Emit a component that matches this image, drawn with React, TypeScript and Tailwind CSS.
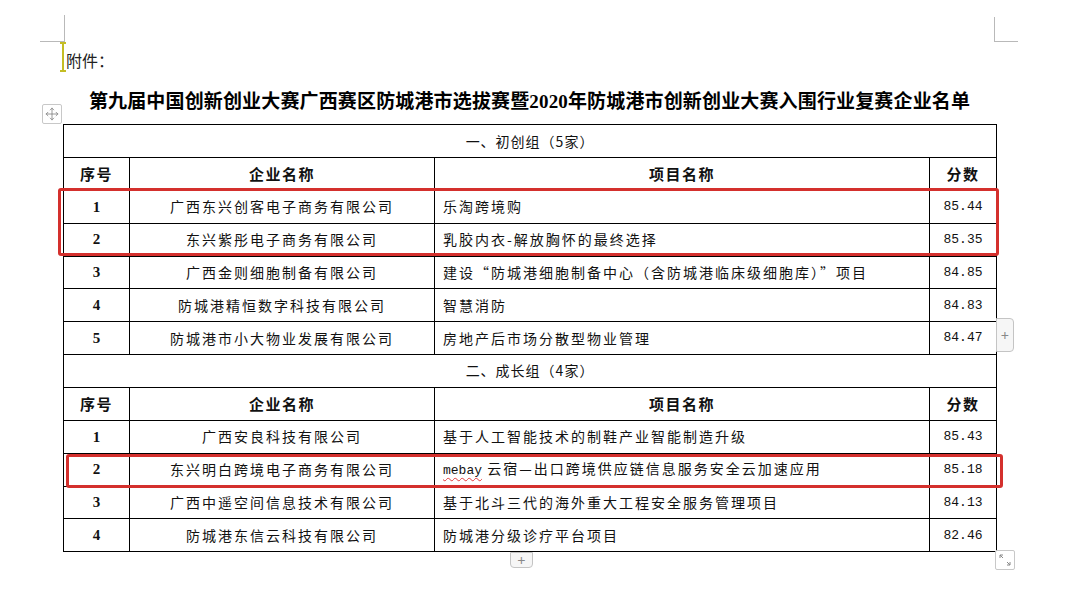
import { Move } from "lucide-react";

type Row = { no: string; company: string; project: React.ReactNode; score: string };

const groupOne: Row[] = [
  { no: "1", company: "广西东兴创客电子商务有限公司", project: "乐淘跨境购", score: "85.44" },
  { no: "2", company: "东兴紫彤电子商务有限公司", project: "乳胶内衣-解放胸怀的最终选择", score: "85.35" },
  { no: "3", company: "广西金则细胞制备有限公司", project: "建设“防城港细胞制备中心（含防城港临床级细胞库）”项目", score: "84.85" },
  { no: "4", company: "防城港精恒数字科技有限公司", project: "智慧消防", score: "84.83" },
  { no: "5", company: "防城港市小大物业发展有限公司", project: "房地产后市场分散型物业管理", score: "84.47" },
];

const groupTwo: Row[] = [
  { no: "1", company: "广西安良科技有限公司", project: "基于人工智能技术的制鞋产业智能制造升级", score: "85.43" },
  {
    no: "2",
    company: "东兴明白跨境电子商务有限公司",
    project: (
      <>
        <span className="underline decoration-wavy decoration-[#e03a3a] decoration-1 underline-offset-[3px] tracking-[0px] font-['Liberation_Mono',monospace] text-[13px]">mebay</span>
        {" 云宿—出口跨境供应链信息服务安全云加速应用"}
      </>
    ),
    score: "85.18",
  },
  { no: "3", company: "广西中遥空间信息技术有限公司", project: "基于北斗三代的海外重大工程安全服务管理项目", score: "84.13" },
  { no: "4", company: "防城港东信云科技有限公司", project: "防城港分级诊疗平台项目", score: "82.46" },
];

const cell = "border border-black p-0 align-middle";

function SectionRows({ title, rows }: { title: string; rows: Row[] }) {
  return (
    <>
      <tr className="h-[33px]">
        <td colSpan={4} className={`${cell} text-center text-[14px] tracking-[1px]`}>
          {title}
        </td>
      </tr>
      <tr className="h-[33px] font-bold text-[15px] tracking-[1.5px]">
        <td className={`${cell} text-center`}>序号</td>
        <td className={`${cell} text-center`}>企业名称</td>
        <td className={`${cell} text-center`}>项目名称</td>
        <td className={`${cell} text-center`}>分数</td>
      </tr>
      {rows.map((r) => (
        <tr key={title + r.no} className="h-[32.8px]">
          <td className={`${cell} text-center font-['Liberation_Serif',serif] font-bold text-[15px]`}>{r.no}</td>
          <td className={`${cell} text-center text-[14px] tracking-[2px]`}>{r.company}</td>
          <td className={`${cell} pl-[8px] text-[14px] tracking-[2px] whitespace-nowrap`}>{r.project}</td>
          <td className={`${cell} text-center font-['Liberation_Mono',monospace] text-[13px]`}>{r.score}</td>
        </tr>
      ))}
    </>
  );
}

export default function App() {
  return (
    <div className="relative w-[1075px] h-[591px] overflow-hidden bg-white text-[#111] font-['Noto_Sans_CJK_SC',sans-serif]">
      {/* page corner marks */}
      <div className="absolute left-[64px] top-[15px] w-px h-[27px] bg-[#b9b9b9]" />
      <div className="absolute left-[40px] top-[41px] w-[24px] h-px bg-[#b9b9b9]" />
      <div className="absolute left-[994px] top-[17px] w-px h-[25px] bg-[#b9b9b9]" />
      <div className="absolute left-[994px] top-[41px] w-[24px] h-px bg-[#b9b9b9]" />

      {/* text cursor */}
      <div className="absolute left-[62px] top-[42px] w-[2px] h-[30px] bg-[#c4bd24]" />
      <div className="absolute left-[60px] top-[42px] w-[6px] h-[2px] bg-[#c4bd24]" />
      <div className="absolute left-[60px] top-[70px] w-[6px] h-[2px] bg-[#c4bd24]" />

      <div className="pl-[63px] pt-[50px] w-[996px]">
        <div className="pl-[3px] h-[20px] text-[16px] leading-[20px] text-[#222]">附件：</div>
        <h1 className="mt-[20px] h-[24px] text-center font-['Liberation_Serif','Noto_Sans_CJK_SC',serif] font-bold text-[19px] leading-[24px] tracking-[0.15px] text-black whitespace-nowrap">
          第九届中国创新创业大赛广西赛区防城港市选拔赛暨2020年防城港市创新创业大赛入围行业复赛企业名单
        </h1>
        <table className="mt-[10px] w-[933px] table-fixed border-collapse">
          <colgroup>
            <col className="w-[66px]" />
            <col className="w-[305px]" />
            <col className="w-[495px]" />
            <col className="w-[67px]" />
          </colgroup>
          <tbody>
            <SectionRows title="一、初创组（5家）" rows={groupOne} />
            <SectionRows title="二、成长组（4家）" rows={groupTwo} />
          </tbody>
        </table>
      </div>

      {/* highlight boxes */}
      <div className="absolute left-[58px] top-[188px] w-[941px] h-[68px] border-[3px] border-[#d4302d] rounded-[3px]" />
      <div className="absolute left-[66px] top-[454px] w-[937px] h-[34px] border-[3px] border-[#d4302d] rounded-[3px]" />

      {/* table handles */}
      <div className="absolute left-[42px] top-[104px] w-[20px] h-[20px] border border-[#c8c8c8] rounded-[2px] bg-white flex items-center justify-center">
        <Move size={14} strokeWidth={1.3} className="text-[#777]" />
      </div>
      <div className="absolute left-[996px] top-[318px] w-[18px] h-[34px] border border-[#c4c4c4] rounded-r-[4px] bg-[#f6f6f6] flex items-center justify-center text-[#888] text-[14px] leading-none">
        +
      </div>
      <div className="absolute left-[510px] top-[552px] w-[23px] h-[16px] border border-[#c4c4c4] rounded-b-[4px] bg-[#f6f6f6] flex items-center justify-center text-[#888] text-[14px] leading-none">
        +
      </div>
      <div className="absolute left-[995px] top-[550px] w-[20px] h-[20px] border border-[#c8c8c8] rounded-[2px] bg-white">
        <svg width="18" height="18" viewBox="0 0 18 18" fill="none" stroke="#888" strokeWidth="1">
          <path d="M4 4 L7 7 M4 4 L4 7 M4 4 L7 4" />
          <path d="M14 14 L11 11 M14 14 L14 11 M14 14 L11 14" />
        </svg>
      </div>
    </div>
  );
}
